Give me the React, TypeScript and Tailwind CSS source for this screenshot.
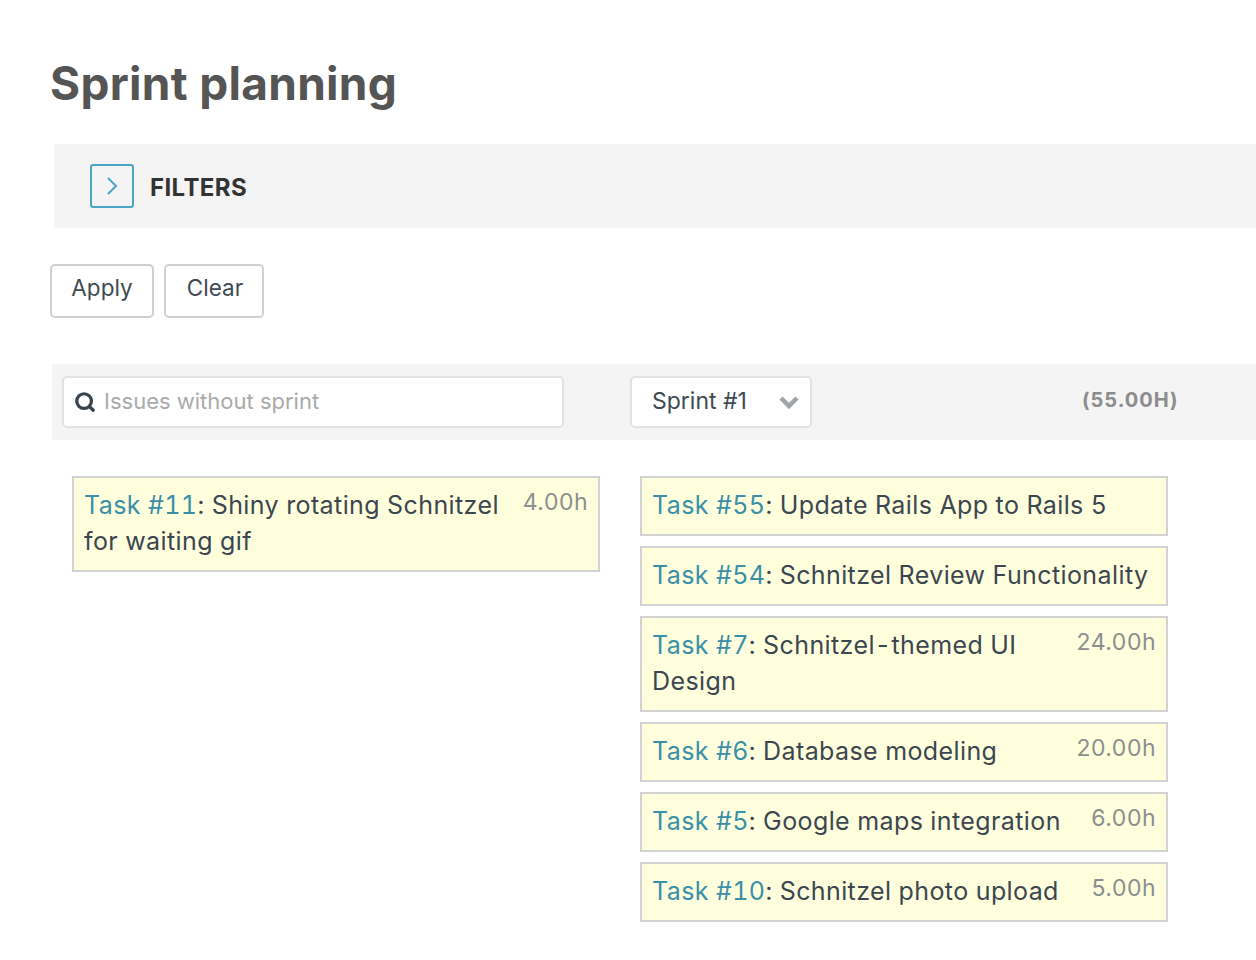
import { Search } from 'lucide-react';

const FONT = "font-['Inter','Liberation_Sans',sans-serif]";

interface Task {
  id: string;
  title: string;
  hours?: string;
}

const rightTasks: Task[] = [
  { id: '55', title: 'Update Rails App to Rails 5' },
  { id: '54', title: 'Schnitzel Review Functionality' },
  { id: '7', title: 'Schnitzel-themed UI Design', hours: '24.00h' },
  { id: '6', title: 'Database modeling', hours: '20.00h' },
  { id: '5', title: 'Google maps integration', hours: '6.00h' },
  { id: '10', title: 'Schnitzel photo upload', hours: '5.00h' },
];

function TaskCard({ task, textWidth }: { task: Task; textWidth?: string }) {
  return (
    <div className="flex items-start justify-between border-2 border-[#d3d3d3] bg-[#ffffdd] px-[10px] pt-[9px] pb-[11px]">
      <div className={`text-[25px] leading-[36px] tracking-[0.4px] text-[#3c4650] tabular-nums ${textWidth ?? ''}`}>
        <span className="text-[#3a8fa9]">Task #{task.id}</span>: {task.title}
      </div>
      {task.hours && (
        <span className="text-[23px] leading-[30px] tracking-[0.5px] text-[#8b8f8f]">{task.hours}</span>
      )}
    </div>
  );
}

export default function App() {
  return (
    <div className={`${FONT} min-h-[960px] overflow-hidden bg-white pl-[50px] pt-[55px]`}>
      <h1 className="text-[46px] font-bold leading-[56px] tracking-[0.3px] text-[#555555]">Sprint planning</h1>

      <div className="ml-[4px] mt-[33px] flex h-[84px] items-center bg-[#f4f4f4] pl-[36px]">
        <div className="flex h-[44px] w-[44px] items-center justify-center rounded-[3px] border-2 border-[#4ba6c6]">
          <svg width="12" height="20" viewBox="0 0 12 20" fill="none" stroke="#4ba6c6" strokeWidth="2" className="-ml-[1px]">
            <path d="M2 2l8 8-8 8" />
          </svg>
        </div>
        <span className="ml-[16px] pt-[4px] text-[24px] font-bold tracking-[0.4px] text-[#333333]">FILTERS</span>
      </div>

      <div className="mt-[36px] flex gap-[10px]">
        <button className="h-[54px] w-[104px] rounded-[5px] border-2 border-[#cfcfcf] pb-[6px] text-[22.5px] text-[#404a52]">Apply</button>
        <button className="h-[54px] w-[100px] rounded-[5px] border-2 border-[#cfcfcf] pb-[6px] pl-[2px] text-[22.5px] text-[#404a52]">Clear</button>
      </div>

      <div className="ml-[2px] mt-[46px] flex h-[76px] items-center bg-[#f4f4f4] pl-[10px]">
        <div className="flex h-[52px] w-[502px] items-center rounded-[5px] border-2 border-[#e2e2e2] bg-white pl-[10px]">
          <Search className="h-[22px] w-[22px] text-[#36424c]" strokeWidth={3.5} />
          <span className="ml-[8px] pb-[2px] text-[22px] text-[#aaaaaa]">Issues without sprint</span>
        </div>
        <div className="ml-[66px] flex h-[52px] w-[182px] items-center justify-between rounded-[5px] border-2 border-[#e2e2e2] bg-white pl-[20px] pr-[11px]">
          <span className="pb-[2px] text-[23px] text-[#404a52]">Sprint #1</span>
          <svg width="20" height="14" viewBox="0 0 20 14" fill="none" stroke="#a0a4a8" strokeWidth="4.5">
            <path d="M2 3l8 8 8-8" />
          </svg>
        </div>
        <span className="ml-[270px] pb-[4px] text-[20px] font-bold tracking-[1px] text-[#8c8c8c]">(55.00H)</span>
      </div>

      <div className="ml-[22px] mt-[36px] flex items-start gap-[40px]">
        <div className="w-[528px]">
          <TaskCard task={{ id: '11', title: 'Shiny rotating Schnitzel for waiting gif', hours: '4.00h' }} textWidth="w-[425px]" />
        </div>
        <div className="flex w-[528px] flex-col gap-[10px]">
          {rightTasks.map((task) => (
            <TaskCard key={task.id} task={task} textWidth={task.id === '7' ? 'w-[380px]' : undefined} />
          ))}
        </div>
      </div>
    </div>
  );
}
